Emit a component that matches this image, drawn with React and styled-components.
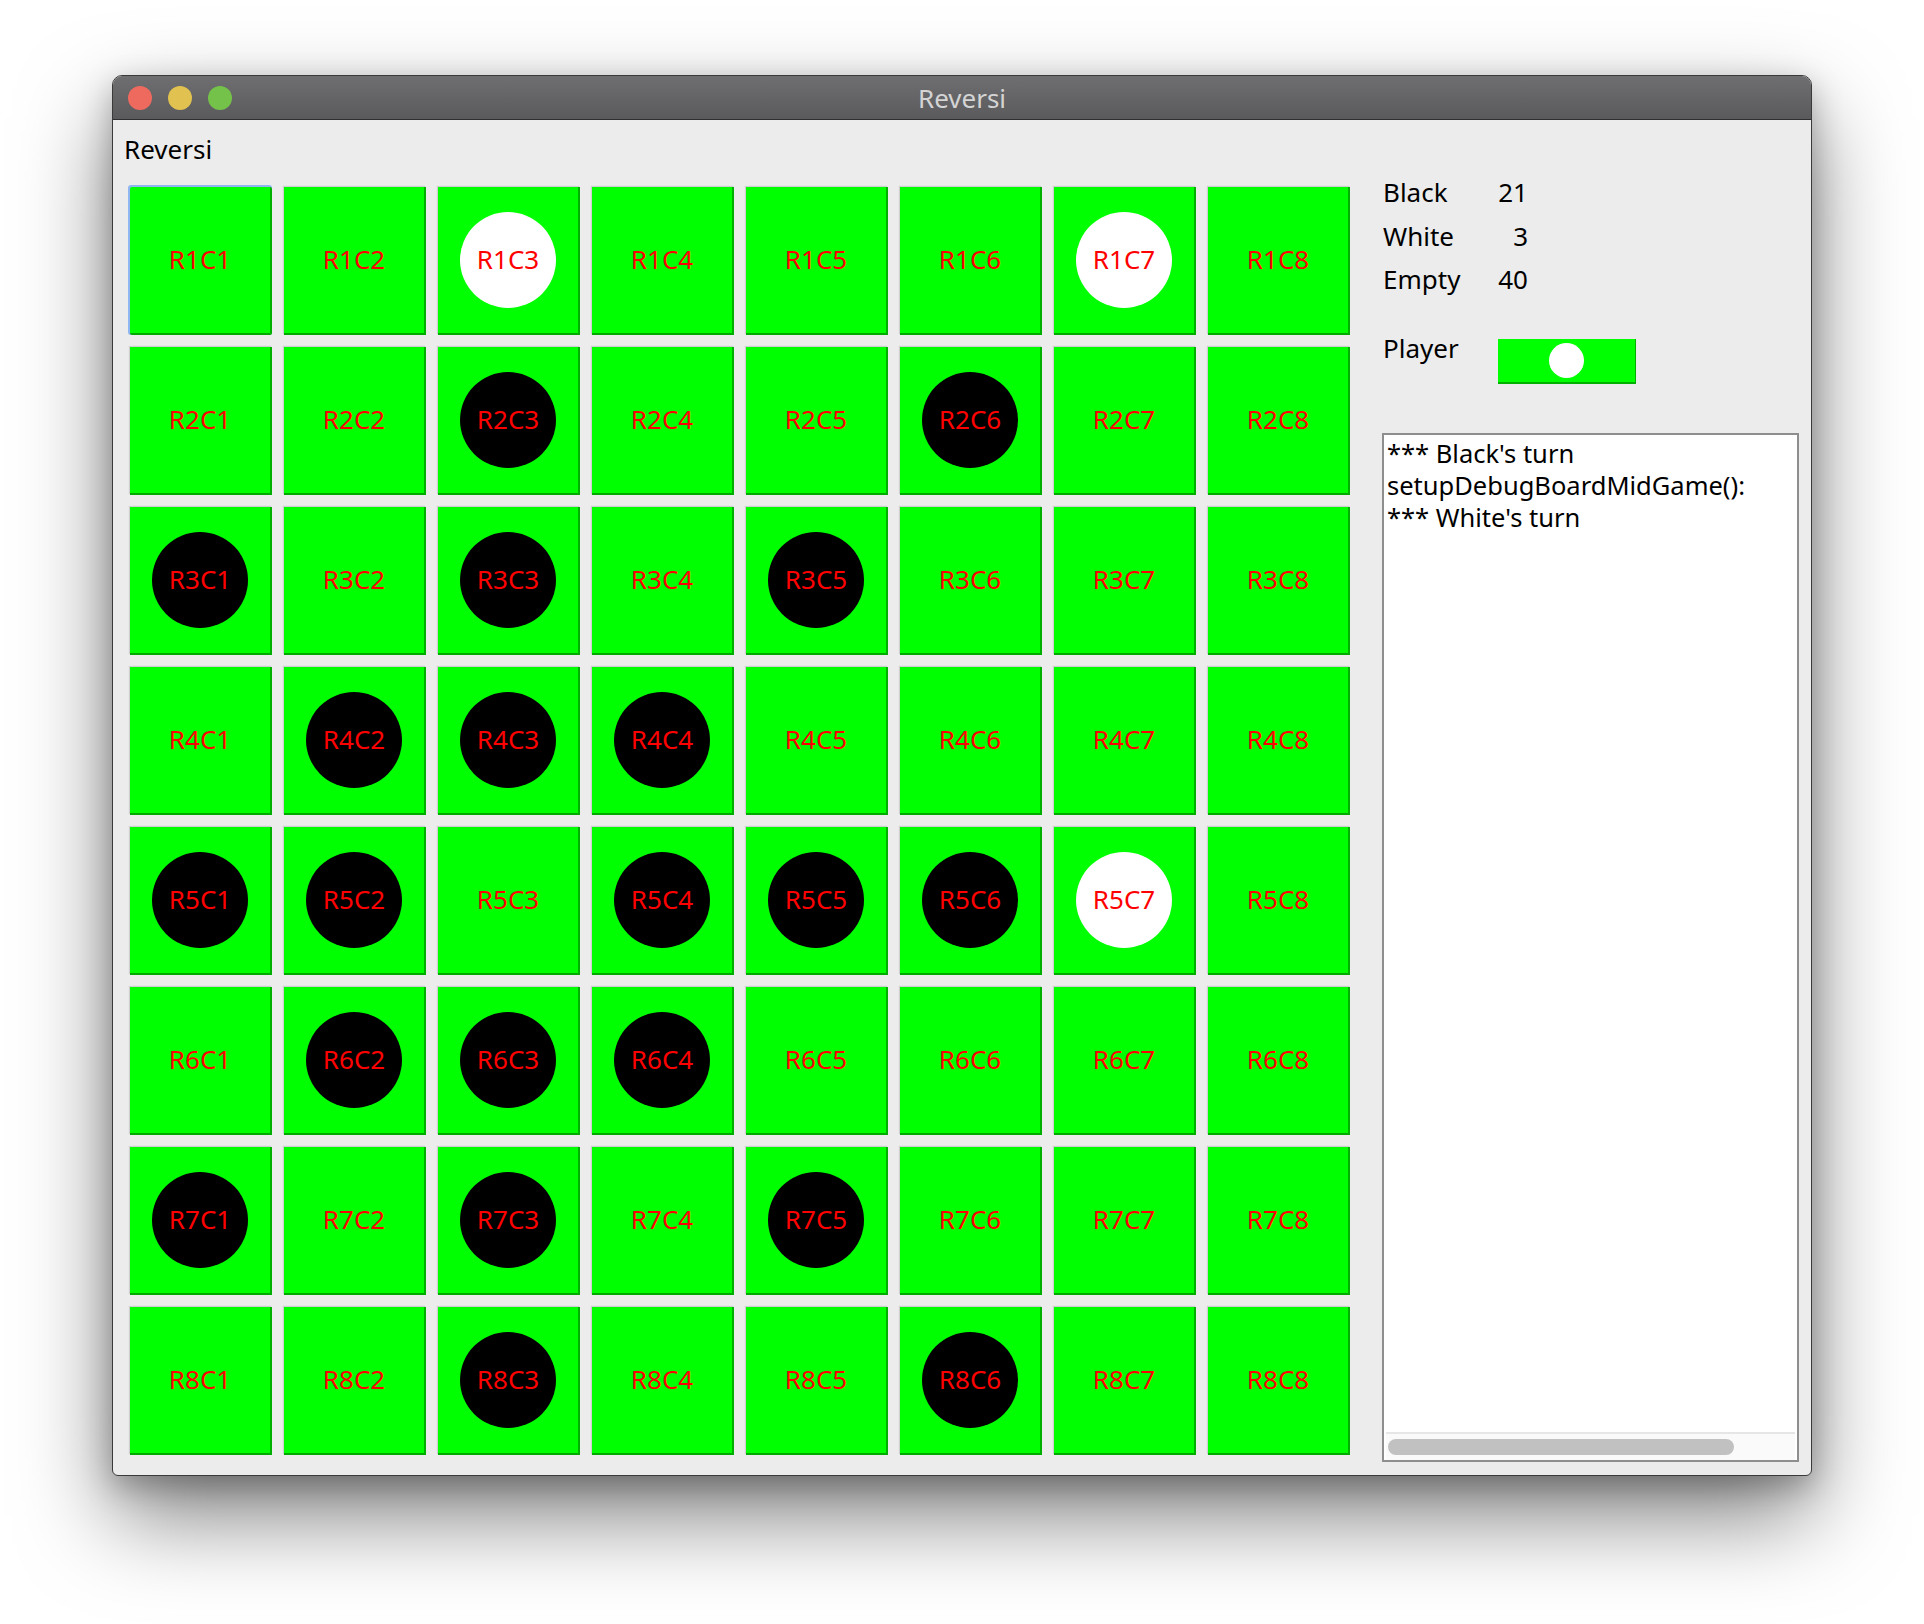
import React from "react";
import styled, { createGlobalStyle } from "styled-components";

const board = [
    "..W...W.",
    "..B..B..",
    "B.B.B...",
    ".BBB....",
    "BB.BBBW.",
    ".BBB....",
    "B.B.B...",
    "..B..B..",
];

const logLines = [
    "*** Black's turn",
    "setupDebugBoardMidGame():",
    "*** White's turn",
];

export default function App() {
    const flat = board.join("");
    const counts = {
        black: flat.split("B").length - 1,
        white: flat.split("W").length - 1,
        empty: flat.split(".").length - 1,
    };

    return (
        <>
            <GlobalStyle />
            <Page>
                <Window>
                    <TitleBar>
                        <Lights>
                            <Light color="#ee6a5f" />
                            <Light color="#e1c14f" />
                            <Light color="#74c24a" />
                        </Lights>
                        <Title>Reversi</Title>
                    </TitleBar>
                    <Content>
                        <Heading>Reversi</Heading>
                        <Main>
                            <Board>
                                {board.map((row, r) =>
                                    row.split("").map((ch, c) => (
                                        <Cell key={`${r}-${c}`} $focus={r === 0 && c === 0}>
                                            <Disk $piece={ch}>
                                                R{r + 1}C{c + 1}
                                            </Disk>
                                        </Cell>
                                    ))
                                )}
                            </Board>
                            <Side>
                                <Stats>
                                    <span>Black</span>
                                    <Num>{counts.black}</Num>
                                    <span>White</span>
                                    <Num>{counts.white}</Num>
                                    <span>Empty</span>
                                    <Num>{counts.empty}</Num>
                                </Stats>
                                <PlayerRow>
                                    <PlayerLabel>Player</PlayerLabel>
                                    <Toggle>
                                        <ToggleDot />
                                    </Toggle>
                                </PlayerRow>
                                <LogBox>
                                    <LogText>
                                        {logLines.map((line, i) => (
                                            <LogLine key={i}>{line}</LogLine>
                                        ))}
                                    </LogText>
                                    <ScrollTrack>
                                        <ScrollThumb />
                                    </ScrollTrack>
                                </LogBox>
                            </Side>
                        </Main>
                    </Content>
                </Window>
            </Page>
        </>
    );
}

const GlobalStyle = createGlobalStyle`
    body {
        margin: 0;
        background: #ffffff;
        font-family: "Noto Sans", "DejaVu Sans", sans-serif;
    }
`;

const Page = styled.div`
    width: 1924px;
    height: 1624px;
    padding: 75px 0 0 112px;
    box-sizing: border-box;
    overflow: hidden;
`;

const Window = styled.div`
    width: 1700px;
    height: 1401px;
    box-sizing: border-box;
    border: 1px solid #3a3a3a;
    border-radius: 10px 10px 6px 6px;
    background: #ececec;
    overflow: hidden;
    display: flex;
    flex-direction: column;
    box-shadow: 0 40px 90px rgba(0, 0, 0, 0.5), 0 10px 30px rgba(0, 0, 0, 0.25);
`;

const TitleBar = styled.div`
    height: 43px;
    flex: none;
    position: relative;
    display: flex;
    align-items: center;
    justify-content: center;
    background: linear-gradient(#6f6f71, #5a5a5c);
    border-bottom: 1px solid #2e2e2e;
`;

const Lights = styled.div`
    position: absolute;
    left: 15px;
    top: 10px;
    display: flex;
    gap: 16px;
`;

const Light = styled.div`
    width: 24px;
    height: 24px;
    border-radius: 50%;
    background: ${(p) => p.color};
`;

const Title = styled.div`
    color: #d4d4d4;
    font-size: 26px;
    line-height: 30px;
`;

const Content = styled.div`
    flex: 1;
    padding: 14px 12px 14px 11px;
    display: flex;
    flex-direction: column;
`;

const Heading = styled.div`
    font-size: 26px;
    line-height: 30px;
    color: #000;
`;

const Main = styled.div`
    margin-top: 7px;
    display: flex;
    align-items: flex-start;
`;

const Board = styled.div`
    margin: 16px 0 0 6px;
    display: grid;
    grid-template-columns: repeat(8, 142px);
    grid-template-rows: repeat(8, 148px);
    gap: 12px;
`;

const Cell = styled.div`
    box-sizing: border-box;
    background: #00ff00;
    border-right: 2px solid #00b000;
    border-bottom: 2px solid #00a800;
    display: flex;
    align-items: center;
    justify-content: center;
    box-shadow: ${(p) =>
        p.$focus
            ? "-1px -1px 0 1px #8fb6f0"
            : "-1px -1px 1px rgba(0, 0, 0, 0.12)"};
    border-radius: ${(p) => (p.$focus ? "2px" : "0")};
`;

const Disk = styled.div`
    width: 96px;
    height: 96px;
    box-sizing: border-box;
    padding-bottom: 3px;
    border-radius: 50%;
    flex: none;
    display: flex;
    align-items: center;
    justify-content: center;
    background: ${(p) =>
        p.$piece === "B" ? "#000" : p.$piece === "W" ? "#fff" : "transparent"};
    color: #ff0000;
    font-size: 26px;
    line-height: 30px;
    white-space: nowrap;
`;

const Side = styled.div`
    margin-left: 32px;
    width: 418px;
    height: 1291px;
    display: flex;
    flex-direction: column;
`;

const Stats = styled.div`
    display: grid;
    grid-template-columns: 95px 50px;
    grid-auto-rows: 43.5px;
    padding-left: 1px;
    font-size: 26px;
    line-height: 43.5px;
    color: #000;
`;

const Num = styled.span`
    text-align: right;
`;

const PlayerRow = styled.div`
    margin-top: 25px;
    display: flex;
    align-items: flex-start;
`;

const PlayerLabel = styled.div`
    width: 115px;
    padding-left: 1px;
    font-size: 26px;
    line-height: 43.5px;
    color: #000;
`;

const Toggle = styled.div`
    margin-top: 12px;
    width: 138px;
    height: 45px;
    box-sizing: border-box;
    background: #00ff00;
    border-right: 1px solid #00b000;
    border-bottom: 2px solid #00b000;
    display: flex;
    align-items: center;
    justify-content: center;
`;

const ToggleDot = styled.div`
    width: 35px;
    height: 35px;
    border-radius: 50%;
    background: #fff;
`;

const LogBox = styled.div`
    margin-top: 49px;
    flex: 1;
    box-sizing: border-box;
    border: 2px solid #8e8e8e;
    background: #fff;
    display: flex;
    flex-direction: column;
`;

const LogText = styled.div`
    flex: 1;
    padding: 2px 0 0 3px;
    font-size: 25.5px;
    color: #000;
    white-space: nowrap;
`;

const LogLine = styled.div`
    height: 32px;
    line-height: 32px;
`;

const ScrollTrack = styled.div`
    height: 28px;
    margin: 0 2px;
    box-sizing: border-box;
    border-top: 2px solid #e6e6e6;
    background: #fafafa;
    display: flex;
    align-items: center;
    padding: 0 2px;
`;

const ScrollThumb = styled.div`
    width: 346px;
    height: 16px;
    border-radius: 8px;
    background: #c1c1c1;
`;
